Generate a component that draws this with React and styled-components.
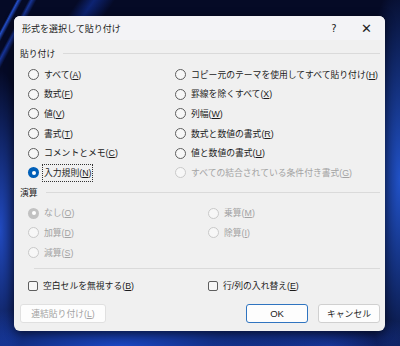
import styled, { createGlobalStyle } from 'styled-components';

const GlobalStyle = createGlobalStyle`
  html, body {
    margin: 0;
    padding: 0;
  }
  body {
    width: 400px;
    height: 346px;
    overflow: hidden;
    font-family: "Liberation Sans", "Noto Sans CJK JP", sans-serif;
    background:
      linear-gradient(118deg, transparent 0 8%, rgba(40,90,230,0.85) 9%, transparent 11% 14%, rgba(30,70,200,0.7) 15.5%, transparent 18%) 0 0 / 140px 120px no-repeat,
      linear-gradient(125deg, transparent 0 30%, rgba(20,60,190,0.5) 36%, transparent 44%) 0 0 / 220px 60px no-repeat,
      radial-gradient(ellipse 40px 200px at 400px 180px, rgba(40,100,240,0.8), transparent 100%),
      radial-gradient(ellipse 260px 40px at 120px 346px, rgba(30,80,220,0.85), transparent 100%),
      radial-gradient(ellipse 30px 160px at 0px 230px, rgba(40,90,230,0.8), transparent 100%),
      radial-gradient(ellipse 120px 30px at 330px 346px, rgba(30,70,200,0.6), transparent 100%),
      #050a26;
  }
`;

const Page = styled.div`
  padding: 16px 15px 0 14px;
`;

const Dialog = styled.div`
  width: 371px;
  height: 315px;
  background: #f0f0f0;
  border-radius: 6px;
  overflow: hidden;
  box-shadow: 0 2px 10px rgba(0, 0, 0, 0.5);
  display: flex;
  flex-direction: column;
  color: #1b1b1b;
  font-size: 8.8px;
`;

const TitleBar = styled.div`
  height: 24px;
  background: #f3f3f6;
  display: flex;
  align-items: center;
  padding: 0 0 0 8px;
`;

const Title = styled.div`
  flex: 1;
  font-size: 9px;
`;

const TitleButton = styled.div`
  width: ${(p) => p.$w}px;
  text-align: center;
  font-size: ${(p) => p.$size}px;
  font-family: "DejaVu Sans", sans-serif;
  font-weight: ${(p) => p.$weight || 400};
  color: #222;
`;

const Body = styled.div`
  flex: 1;
  padding: 6px 5px 8px 6px;
  display: flex;
  flex-direction: column;
`;

const GroupHead = styled.div`
  display: flex;
  align-items: center;
  height: 14px;
  gap: 8px;
  margin-top: ${(p) => p.$top || 0}px;
  &::after {
    content: '';
    flex: 1;
    height: 1px;
    background: #dadada;
  }
`;

const Grid = styled.div`
  display: grid;
  grid-template-columns: ${(p) => p.$cols};
  grid-auto-rows: 19.6px;
  margin: ${(p) => p.$margin};
`;

const Option = styled.label`
  display: flex;
  align-items: center;
  gap: 4px;
  white-space: nowrap;
  color: ${(p) => (p.$disabled ? '#a3a3a3' : '#1b1b1b')};
`;

const Radio = styled.span`
  width: 11px;
  height: 11px;
  box-sizing: border-box;
  border-radius: 50%;
  flex: none;
  border: 1px solid ${(p) => (p.$disabled ? '#c9c9c9' : '#5e5e5e')};
  background: #f7f7f7;
  display: flex;
  align-items: center;
  justify-content: center;
  ${(p) =>
    p.$checked &&
    `
    border: none;
    background: ${p.$disabled ? '#c2c2c2' : '#005fb8'};
    &::after {
      content: '';
      width: 4px;
      height: 4px;
      border-radius: 50%;
      background: #fff;
    }
  `}
`;

const Check = styled.span`
  width: 10px;
  height: 10px;
  box-sizing: border-box;
  border: 1px solid #5e5e5e;
  border-radius: 2px;
  background: #f7f7f7;
  flex: none;
`;

const Text = styled.span`
  outline: ${(p) => (p.$focus ? '1px dotted #333' : 'none')};
  padding: 0 1px;
  line-height: 16px;
`;

const Separator = styled.div`
  height: 1px;
  background: #dadada;
  margin: 6px 0 7px 14px;
`;

const Footer = styled.div`
  display: flex;
  align-items: center;
  margin-top: auto;
  gap: 10px;
`;

const Button = styled.button`
  height: 19px;
  width: ${(p) => p.$w}px;
  padding: 0;
  box-sizing: border-box;
  border-radius: 3px;
  font-family: inherit;
  font-size: ${(p) => (p.$primary ? 9.5 : 8.8)}px;
  background: #fdfdfd;
  color: ${(p) => (p.$disabled ? '#a3a3a3' : '#1b1b1b')};
  border: 1px solid ${(p) => (p.$primary ? '#2f74c0' : p.$disabled ? '#e0e0e0' : '#d0d0d0')};
  margin-left: ${(p) => (p.$primary ? 'auto' : '0')};
`;

const Acc = ({ label, k }) => (
  <>
    {label}(<u>{k}</u>)
  </>
);

const pasteLeft = [
  ['すべて', 'A'],
  ['数式', 'F'],
  ['値', 'V'],
  ['書式', 'T'],
  ['コメントとメモ', 'C'],
  ['入力規則', 'N', true],
];

const pasteRight = [
  ['コピー元のテーマを使用してすべて貼り付け', 'H'],
  ['罫線を除くすべて', 'X'],
  ['列幅', 'W'],
  ['数式と数値の書式', 'R'],
  ['値と数値の書式', 'U'],
  ['すべての結合されている条件付き書式', 'G', false, true],
];

const ops = [
  ['なし', 'O', true],
  ['乗算', 'M'],
  ['加算', 'D'],
  ['除算', 'I'],
  ['減算', 'S'],
];

export default function App() {
  const paste = [];
  pasteLeft.forEach((l, i) => {
    paste.push(l);
    paste.push(pasteRight[i]);
  });

  return (
    <Page>
      <GlobalStyle />
      <Dialog>
        <TitleBar>
          <Title>形式を選択して貼り付け</Title>
          <TitleButton $w={26} $size={10}>?</TitleButton>
          <TitleButton $w={38} $size={13} $weight={300}>✕</TitleButton>
        </TitleBar>
        <Body>
          <GroupHead>貼り付け</GroupHead>
          <Grid $cols="147px 1fr" $margin="5px 0 0 8px">
            {paste.map(([label, k, checked, disabled]) => (
              <Option key={k} $disabled={disabled}>
                <Radio $checked={checked} $disabled={disabled} />
                <Text $focus={checked}>
                  <Acc label={label} k={k} />
                </Text>
              </Option>
            ))}
          </Grid>
          <GroupHead $top={3}>演算</GroupHead>
          <Grid $cols="180px 1fr" $margin="4px 0 0 8px">
            {ops.map(([label, k, checked]) => (
              <Option key={k} $disabled>
                <Radio $checked={checked} $disabled />
                <Text>
                  <Acc label={label} k={k} />
                </Text>
              </Option>
            ))}
          </Grid>
          <Separator />
          <Grid $cols="180px 1fr" $margin="0 0 0 8px">
            <Option>
              <Check />
              <Text>
                <Acc label="空白セルを無視する" k="B" />
              </Text>
            </Option>
            <Option>
              <Check />
              <Text>
                <Acc label="行/列の入れ替え" k="E" />
              </Text>
            </Option>
          </Grid>
          <Footer>
            <Button $w={86} $disabled>
              <Acc label="連結貼り付け" k="L" />
            </Button>
            <Button $w={62} $primary>
              OK
            </Button>
            <Button $w={62}>キャンセル</Button>
          </Footer>
        </Body>
      </Dialog>
    </Page>
  );
}
